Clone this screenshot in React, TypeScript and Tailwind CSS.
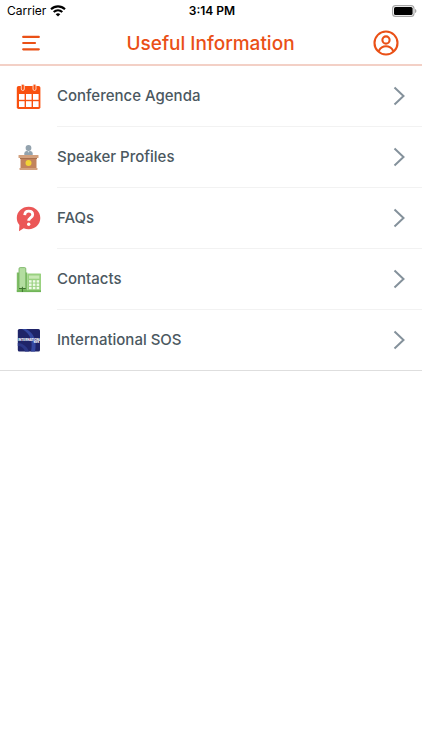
import type { ReactNode } from "react";

function MenuIcon() {
  return (
    <svg width="18" height="16" viewBox="0 0 18 16" stroke="#ea5016" strokeWidth="2.2" strokeLinecap="round" aria-hidden="true">
      <path d="M1.200 1.900H16.800M1.200 8H13M1.200 14.300H16.800" />
    </svg>
  );
}

function ProfileIcon() {
  return (
    <svg width="26" height="26" viewBox="0 0 26 26" fill="none" stroke="#ea5016" strokeWidth="2.100" aria-hidden="true">
      <circle cx="13" cy="13" r="11.500" />
      <circle cx="13" cy="10" r="3.600" />
      <path d="M6 20.600C7.600 17.500 10 16.300 13 16.300S18.400 17.500 20 20.600" strokeLinecap="round" />
    </svg>
  );
}

function WifiIcon() {
  return (
    <svg width="16" height="12" viewBox="0 0 16 12" fill="none" stroke="#000" strokeWidth="2.1" aria-hidden="true">
      <path d="M1 4.3C5 .4 11 .4 15 4.3" />
      <path d="M3.7 7.1C6.2 4.7 9.8 4.7 12.3 7.1" />
      <path d="M8 11.5L5.7 9.2C7 8 9 8 10.3 9.2Z" fill="#000" stroke="none" />
    </svg>
  );
}

function BatteryIcon() {
  return (
    <svg width="25" height="12" viewBox="0 0 25 12" aria-hidden="true">
      <rect x=".6" y=".6" width="21.4" height="10.8" rx="3" fill="#fff" stroke="#a6a6a6" strokeWidth="1.1" />
      <rect x="2" y="2" width="18.600" height="8" rx="1.6" fill="#000" />
      <path d="M23 4V8C23.900 7.700 24.400 7 24.400 6S23.900 4.300 23 4Z" fill="#a6a6a6" />
    </svg>
  );
}

function CalendarIcon() {
  return (
    <svg width="26" height="26" viewBox="0 0 26 26" aria-hidden="true">
      <rect x=".8" y="2" width="23.600" height="23" rx="1.800" fill="#f9500f" />
      <g fill="#fff">
        <rect x="3" y="10" width="5.600" height="5.800" />
        <rect x="10" y="10" width="5.600" height="5.800" />
        <rect x="17" y="10" width="5.600" height="5.800" />
        <rect x="3" y="17.200" width="5.600" height="5.800" />
        <rect x="10" y="17.200" width="5.600" height="5.800" />
        <rect x="17" y="17.200" width="5.600" height="5.800" />
      </g>
      <g fill="#f9500f" stroke="#fbd3c3" strokeWidth="1">
        <rect x="5.300" y=".3" width="3" height="6.200" rx="1.500" />
        <rect x="17" y=".3" width="3" height="6.200" rx="1.500" />
      </g>
    </svg>
  );
}

function PodiumIcon() {
  return (
    <svg width="26" height="26" viewBox="0 0 26 26" aria-hidden="true">
      <circle cx="12.500" cy="3" r="2.900" fill="#93a3ae" />
      <path d="M8.300 11V8.500Q8.300 6 10.500 6H14.500Q16.700 6 16.700 8.500V11Z" fill="#93a3ae" />
      <path d="M11.500 6H13.500L12.500 7.800Z" fill="#d8e0e4" />
      <rect x="4.500" y="12.500" width="16" height="11" fill="#c2835c" />
      <rect x="2.500" y="10" width="20" height="3" rx=".5" fill="#d3a17e" />
      <rect x="4" y="13" width="17" height="1" fill="#a86f4d" />
      <rect x="3.500" y="23" width="18" height="2" rx=".4" fill="#d3a17e" />
      <circle cx="12.500" cy="18" r="3" fill="#f2d335" />
    </svg>
  );
}

function QuestionIcon() {
  return (
    <svg width="26" height="26" viewBox="0 0 26 26" aria-hidden="true">
      <path d="M12.700 .8C19.300 .8 24.300 5.700 24.300 12.100S19.300 23.300 12.700 23.300C10.900 23.300 9.200 23 7.700 22.300L3 25.300L3.400 19.100C1.800 17.200 .8 15 .8 12.100C.8 5.700 6 .8 12.700 .8Z" fill="#eb5757" />
      <path d="M8.700 9.200C8.900 6.500 10.500 5.200 12.700 5.200C15 5.200 16.700 6.500 16.700 8.700C16.700 11.600 12.700 11.700 12.700 14.800" fill="none" stroke="#fff" strokeWidth="2.800" />
      <circle cx="12.700" cy="18.300" r="1.700" fill="#fff" />
    </svg>
  );
}

function PhoneIcon() {
  return (
    <svg width="26" height="26" viewBox="0 0 26 26" aria-hidden="true">
      <rect x=".8" y="5.500" width="10.500" height="19" fill="#7fbd66" />
      <rect x="11.300" y="6.500" width="13.700" height="18" rx=".6" fill="#99d180" />
      <rect x=".8" y="23.300" width="24.200" height="1.800" fill="#70b558" />
      <rect x="13" y="8.500" width="10.300" height="3.200" fill="#c8e8b4" />
      <g fill="#f0fbe9">
        <rect x="13" y="13.200" width="2.600" height="2.400" />
        <rect x="16.800" y="13.200" width="2.600" height="2.400" />
        <rect x="20.600" y="13.200" width="2.600" height="2.400" />
        <rect x="13" y="16.500" width="2.600" height="2.400" />
        <rect x="16.800" y="16.500" width="2.600" height="2.400" />
        <rect x="20.600" y="16.500" width="2.600" height="2.400" />
        <rect x="13" y="19.800" width="2.600" height="2.400" />
        <rect x="16.800" y="19.800" width="2.600" height="2.400" />
        <rect x="20.600" y="19.800" width="2.600" height="2.400" />
      </g>
      <rect x="3" y=".6" width="6.800" height="21" rx="1.200" fill="#b3dda0" stroke="#6fae58" strokeWidth=".8" />
      <path d="M3 21.500H9.800M6.400 19.800V25" stroke="#3f7430" strokeWidth="1" />
    </svg>
  );
}

function SosIcon() {
  return (
    <svg width="26" height="26" viewBox="0 0 26 26" aria-hidden="true">
      <rect x="1.800" y="2" width="22.200" height="22.500" rx="1.500" fill="#1f2468" />
      <path d="M10 2C18 6 21 14 19 24.500H15C17 15 15 7 6 2Z" fill="#3447a0" />
      <path d="M1.800 16C6 16 11 19 13 24.500H9C8 21 5 19 1.800 19Z" fill="#2b3787" />
      <text x="2.200" y="13.500" fill="#fff" fontFamily="Inter, sans-serif" fontSize="3" fontWeight="800">INTERNATIONAL</text>
      <text x="17.500" y="16.300" fill="#fff" fontFamily="Inter, sans-serif" fontSize="2.700" fontWeight="800">SOS</text>
    </svg>
  );
}

function Chevron() {
  return (
    <svg width="12" height="20" viewBox="0 0 12 20" fill="none" stroke="#84919b" strokeWidth="2" aria-hidden="true">
      <path d="M1.500 1.500L10.500 10L1.500 18.500" />
    </svg>
  );
}

const items: { label: string; icon: ReactNode }[] = [
  { label: "Conference Agenda", icon: <CalendarIcon /> },
  { label: "Speaker Profiles", icon: <PodiumIcon /> },
  { label: "FAQs", icon: <QuestionIcon /> },
  { label: "Contacts", icon: <PhoneIcon /> },
  { label: "International SOS", icon: <SosIcon /> },
];

function StatusBar() {
  return (
    <div className="grid grid-cols-3 items-center h-[21px] pl-[7px] pr-[5px] text-xs text-black">
      <div className="flex items-center gap-1">
        <span>Carrier</span>
        <WifiIcon />
      </div>
      <span className="text-center font-semibold">3:14 PM</span>
      <div className="flex justify-end">
        <BatteryIcon />
      </div>
    </div>
  );
}

export default function App() {
  return (
    <div className="min-h-screen bg-white font-['Inter',sans-serif]">
      <StatusBar />
      <header className="flex items-center justify-between h-[45px] pl-[22px] pr-[23px] border-b-2 border-[#f3d0c6]">
        <button type="button" aria-label="Menu" className="flex w-[26px]">
          <MenuIcon />
        </button>
        <h1 className="pt-[2px] text-[19px] leading-6 font-medium text-[#ea5016]">Useful Information</h1>
        <button type="button" aria-label="Profile">
          <ProfileIcon />
        </button>
      </header>
      <nav className="border-b border-[#dedede]">
        <ul>
          {items.map((item, i) => (
            <li key={item.label}>
              <a href="#" className="flex items-center pl-4 text-[15px] leading-6 font-medium text-[#4b585f]">
                <span className="w-[41px] shrink-0">{item.icon}</span>
                <span className={`flex flex-1 items-center justify-between pr-[17px] ${i < items.length - 1 ? "h-[61px] border-b border-[#f2f2f2]" : "h-[60px]"}`}>
                  {item.label}
                  <Chevron />
                </span>
              </a>
            </li>
          ))}
        </ul>
      </nav>
    </div>
  );
}
